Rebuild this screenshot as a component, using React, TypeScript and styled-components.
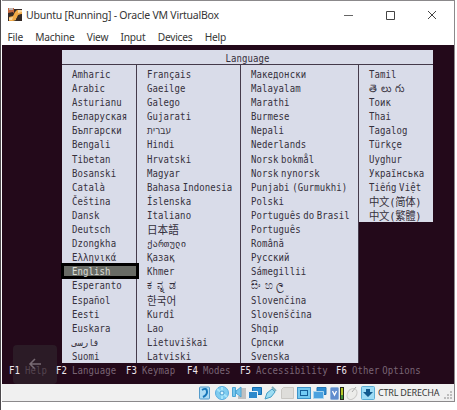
import React from "react";
import styled, { createGlobalStyle } from "styled-components";

const GlobalStyle = createGlobalStyle`
  * { box-sizing: border-box; }
  html, body, #root { height: 100%; }
  body { margin: 0; background: #fff; overflow: hidden; }
`;

const Desktop = styled.div`
  height: 410px;
  width: 457px;
  padding-left: 1px;
  background: #fff;
  font-family: "Noto Sans", "Open Sans", sans-serif;
  color: #363636;
  border-left: 1px solid #4d4a4d;
`;

const Window = styled.div`
  width: 453px;
  height: 402px;
  display: flex;
  flex-direction: column;
  border: 1px solid #8b898b;
  border-left: 0;
  background: #fff;
`;

const TitleBar = styled.header`
  height: 27px;
  flex: none;
  display: flex;
  align-items: center;
  padding: 0 17px 0 6px;
`;

const Title = styled.h1`
  flex: 1;
  margin: 0 0 0 4px;
  font-size: 10.5px;
  font-weight: 400;
  letter-spacing: -0.22px;
  line-height: 16px;
  white-space: nowrap;
`;

const Controls = styled.div`
  display: flex;
  gap: 32px;
  svg { display: block; }
`;

const MenuBar = styled.nav`
  height: 17px;
  flex: none;
  display: flex;
  align-items: center;
  gap: 12.3px;
  padding-left: 5.5px;
  font-size: 10.2px;
  letter-spacing: -0.22px;
  line-height: 16px;
`;

const Screen = styled.main`
  position: relative;
  height: 339px;
  flex: none;
  display: flex;
  flex-direction: column;
  background: #23091a;
  padding: 5px 21px 0 60px;
  font-family: "DejaVu Sans Mono", "DejaVu Sans", "Noto Sans CJK SC", monospace;
  font-size: 9px;
`;

const PanelTitle = styled.div`
  height: 15px;
  line-height: 16px;
  text-align: center;
  background: #d9dce9;
  color: #35303c;
  border-bottom: 1px solid #443a4a;
  flex: none;
`;

const Columns = styled.div`
  display: grid;
  grid-template-columns: 75px 104px 118px 74px;
  align-items: start;
`;

const Column = styled.ul<{ $last?: boolean }>`
  margin: 0;
  padding: 2px 0 0;
  list-style: none;
  background: #d9dce9;
  color: #35303c;
  border-right: ${(p) => (p.$last ? "0" : "1px solid #453b4b")};
`;

const Item = styled.li<{ $selected?: boolean }>`
  height: 14.1px;
  line-height: 14.1px;
  padding-left: 10px;
  white-space: nowrap;
  ${(p) =>
    p.$selected &&
    `
    position: relative;
    z-index: 1;
    color: #d9dcd6;
    background: #686b65;
    outline: 3px solid #000;
    outline-offset: -2px;
    margin-right: -2px;
  `}
`;

const Tall = styled.span<{ $size?: number; $spacing?: number }>`
  display: inline-block;
  transform: translateY(0.6px) scaleY(${(p) => (p.$size ? 1.08 : 1.14)});
  font-size: ${(p) => p.$size ?? 9}px;
  letter-spacing: ${(p) => p.$spacing ?? 0.1}px;
  word-spacing: -3px;
`;

const Keys = styled.footer`
  position: relative;
  z-index: 1;
  display: flex;
  gap: 10px;
  margin: 1px 0 0 -53px;
  line-height: 12px;
  white-space: nowrap;
`;

const Key = styled.span<{ $width: number; $dim?: boolean }>`
  width: ${(p) => p.$width}px;
  flex: none;
  color: ${(p) => (p.$dim ? "#54444f" : "#796575")};
  b { font-weight: 400; color: #f0e8ed; margin-right: 5px; }
`;

const BackButton = styled.button`
  position: absolute;
  left: 11px;
  bottom: 0;
  width: 44px;
  height: 39px;
  border: 0;
  padding: 0;
  border-radius: 4px;
  background: #2b1b26;
  svg { display: block; margin: -1px 0 0 15px; }
`;

const StatusBar = styled.footer`
  flex: 1;
  display: flex;
  align-items: center;
  justify-content: flex-end;
  background: #f0f0f0;
  font-size: 9px;
  letter-spacing: -0.2px;
  line-height: 16px;
  svg { display: block; flex: none; }
`;

const HostKey = styled.span`
  width: 62px;
  margin: 0 3px 0 2px;
  white-space: nowrap;
`;

const columns = [
  ["Amharic", "Arabic", "Asturianu", "Беларуская", "Български", "Bengali", "Tibetan", "Bosanski", "Català", "Čeština", "Dansk", "Deutsch", "Dzongkha", "Ελληνικά", "English", "Esperanto", "Español", "Eesti", "Euskara", "فارسی", "Suomi"],
  ["Français", "Gaeilge", "Galego", "Gujarati", "עברית", "Hindi", "Hrvatski", "Magyar", "Bahasa Indonesia", "Íslenska", "Italiano", "日本語", "ქართული", "Қазақ", "Khmer", "ಕನ್ನಡ", "한국어", "Kurdî", "Lao", "Lietuviškai", "Latviski"],
  ["Македонски", "Malayalam", "Marathi", "Burmese", "Nepali", "Nederlands", "Norsk bokmål", "Norsk nynorsk", "Punjabi (Gurmukhi)", "Polski", "Português do Brasil", "Português", "Română", "Русский", "Sámegillii", "සිංහල", "Slovenčina", "Slovenščina", "Shqip", "Српски", "Svenska"],
  ["Tamil", "తెలుగు", "Тоик", "Thai", "Tagalog", "Türkçe", "Uyghur", "Українська", "Tiếng Việt", "中文(简体)", "中文(繁體)"],
];

const scriptMetrics: Record<string, { $size: number; $spacing: number }> = {
  "日本語": { $size: 10.6, $spacing: 0 },
  "한국어": { $size: 10.6, $spacing: 0 },
  "中文(简体)": { $size: 10.4, $spacing: -0.3 },
  "中文(繁體)": { $size: 10.4, $spacing: -0.3 },
  "ಕನ್ನಡ": { $size: 11, $spacing: 5 },
  "සිංහල": { $size: 10, $spacing: 3.6 },
  "తెలుగు": { $size: 10, $spacing: 4 },
  "ქართული": { $size: 9, $spacing: 0.2 },
  "فارسی": { $size: 9, $spacing: 0 },
};

const keys: [string, string, number][] = [
  ["F1", "Help", 37],
  ["F2", "Language", 60],
  ["F3", "Keymap", 51],
  ["F4", "Modes", 43],
  ["F5", "Accessibility", 86],
  ["F6", "Other Options", 90],
];

const AppIcon = () => (
  <svg width="14" height="14" viewBox="0 0 14 14">
    <path fill="#352a26" d="M0 1h14v12H0z" />
    <path fill="#c5683e" d="M0 0h6v5l-3 2H0z" />
    <path fill="#f0a947" d="M9 2h5v4l-4 1-2 5-3 1H1V9l4-1 2-4z" />
    <path fill="#f7d6a0" d="M10 2h4v2l-4 1zM1 10l4-1-1 3H1z" />
    <path fill="#352a26" d="M0 5l5-1 1 2-5 2H0zM8 11l3-4 3-1v7H8z" />
    <path fill="#c0b5b2" d="M1 0h4v2H1z" />
  </svg>
);

const StatusIcons = () => (
  <svg width="178" height="16" viewBox="0 0 178 16">
    <rect x="1.5" y="2" width="10" height="12" rx="1" fill="#aedcf4" stroke="#559ccb" />
    <path d="M4 5q5-3 5 2 0 3-4 5" fill="none" stroke="#1676b9" strokeWidth="2" />
    <circle cx="24" cy="8" r="6.5" fill="#80cdf0" stroke="#56ace0" />
    <path d="M19 4l10 8M24 2v12" stroke="#a7e4fa" strokeWidth="2" />
    <circle cx="24" cy="8" r="2" fill="#dbf5ff" stroke="#479cd1" />
    <path fill="#c0c0c0" d="M43 3h5v11h-8v-3h3z" />
    <path fill="#79c6ec" stroke="#4ba4d4" d="M34.500 2.500h3v9h-3zM38 6l5-4v10l-5-4z" />
    <path fill="#2f8dd2" stroke="#126bae" d="M54.500 2.500h9v7h-9z" />
    <path fill="#2b88cc" stroke="#eaf5fb" d="M50.500 6.500h9v7h-9z" />
    <path fill="#9cdcf2" stroke="#479fc6" d="M67 14l2-6 5-4 3 3-4 5z" />
    <path stroke="#7dafbc" strokeWidth="2" d="M74 2l4 4" />
    <path fill="#deddda" stroke="#c9c7c3" d="M83.500 4.500l2-2h10v11h-12z" />
    <rect x="99.500" y="2.500" width="13" height="11" fill="#73c7ef" stroke="#3e93c9" />
    <rect x="102.500" y="5.500" width="7" height="5" fill="#72caf5" stroke="#145d99" />
    <path fill="#2e8bd0" stroke="#2272b4" d="M119 2.500h9v7h-9z" />
    <path fill="#4ba1df" stroke="#a9d5ef" d="M115.500 6.500h10v7h-10z" />
    <rect x="132.500" y="2.500" width="8" height="12" rx="1" fill="#618dce" stroke="#8cb1db" />
    <path fill="none" stroke="#fff" strokeWidth="1.300" d="M134.500 6l2 4 2-4" />
    <path fill="#252719" d="M142 2h4v13h-4z" />
    <path fill="#b7c929" d="M143 3h2v7h-2z" />
    <path fill="#3f8d35" d="M143 10h2v4h-2z" />
    <ellipse cx="154" cy="9" rx="4.500" ry="6" transform="rotate(35 154 9)" fill="#ececea" stroke="#cbcac8" />
    <path stroke="#aaa" d="M154 7l4-5" />
    <rect x="163.500" y="1.500" width="13" height="13" rx="1" fill="#9ddbf5" stroke="#5caed5" />
    <path fill="#11598e" d="M168 4h4v3h3l-5 5-5-5h3z" />
  </svg>
);

export default function App() {
  return (
    <>
      <GlobalStyle />
      <Desktop>
        <Window>
          <TitleBar>
            <AppIcon />
            <Title>Ubuntu [Running] - Oracle VM VirtualBox</Title>
            <Controls>
              <svg width="10" height="10" stroke="#666"><path d="M1 5.500h9" /></svg>
              <svg width="10" height="10" stroke="#444" fill="none"><path d="M1.500 1.500h8v8h-8z" /></svg>
              <svg width="10" height="10" stroke="#444"><path d="M1 1l8 8M9 1l-8 8" /></svg>
            </Controls>
          </TitleBar>
          <MenuBar>
            {["File", "Machine", "View", "Input", "Devices", "Help"].map((m) => <span key={m}>{m}</span>)}
          </MenuBar>
          <Screen>
            <PanelTitle><Tall>Language</Tall></PanelTitle>
            <Columns>
              {columns.map((names, i) => (
                <Column key={i} $last={i === 3}>
                  {names.map((name) => (
                    <Item key={name} $selected={name === "English"}>
                      <Tall {...scriptMetrics[name]}>{name}</Tall>
                    </Item>
                  ))}
                </Column>
              ))}
            </Columns>
            <Keys>
              {keys.map(([k, label, width]) => (
                <Key key={k} $width={width} $dim={k === "F1"}><Tall><b>{k}</b>{label}</Tall></Key>
              ))}
            </Keys>
            <BackButton aria-label="Back">
              <svg width="14" height="12" fill="none" stroke="#786b74" strokeWidth="1.500"><path d="M13 6H2M7 1L2 6l5 5" /></svg>
            </BackButton>
          </Screen>
          <StatusBar>
            <StatusIcons />
            <HostKey>CTRL DERECHA</HostKey>
            <svg width="11" height="14" fill="#bdbdbd"><path d="M7 5h2v2H7zM4 8h2v2H4zM7 8h2v2H7zM1 11h2v2H1zM4 11h2v2H4zM7 11h2v2H7z" /></svg>
          </StatusBar>
        </Window>
      </Desktop>
    </>
  );
}
